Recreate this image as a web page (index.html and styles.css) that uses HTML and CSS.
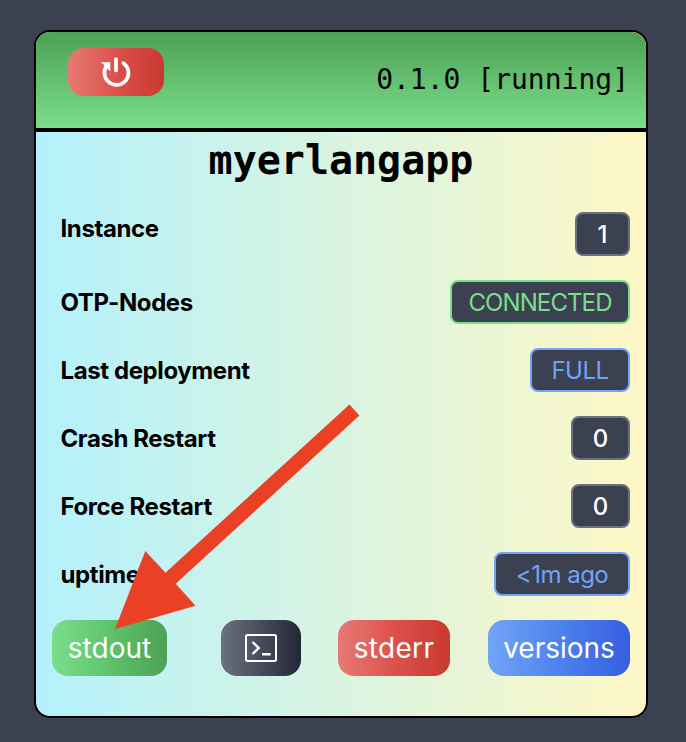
FILE: index.html
```
<!DOCTYPE html>
<html lang="en">
<head>
<meta charset="utf-8">
<title>myerlangapp</title>
<link rel="stylesheet" href="styles.css">
</head>
<body>
<main class="card">
  <header class="card-header">
    <button class="btn restart red" aria-label="Restart">
      <svg width="32" height="32" viewBox="0 0 32 32" fill="none" stroke="#fff" stroke-width="3.8" stroke-linecap="round">
        <path d="M16 3.2v11.2M23.5 7.2A12 12 0 1 1 7.8 8.6"/>
        <path d="M.4 6.2h9.9v9L7.5 12.4 5 12.2 4 8.8z" fill="#fff" stroke="none"/>
      </svg>
    </button>
    <span class="version">0.1.0 [running]</span>
  </header>
  <h1 class="title">myerlangapp</h1>
  <section class="rows">
    <div class="row first"><span class="label">Instance</span><span class="badge one">1</span></div>
    <div class="row"><span class="label">OTP-Nodes</span><span class="badge connected">CONNECTED</span></div>
    <div class="row"><span class="label">Last deployment</span><span class="badge blue-text full">FULL</span></div>
    <div class="row"><span class="label">Crash Restart</span><span class="badge zero">0</span></div>
    <div class="row"><span class="label">Force Restart</span><span class="badge zero">0</span></div>
    <div class="row"><span class="label">uptime</span><span class="badge blue-text ago">&lt;1m ago</span></div>
  </section>
  <footer class="actions">
    <button class="btn stdout">stdout</button>
    <button class="btn terminal" aria-label="Terminal">
      <svg width="32" height="28" viewBox="0 0 32 28" fill="none" stroke="#fff" stroke-width="2">
        <rect x="1" y="1" width="30" height="26" rx="1.5"/>
        <path d="M7.5 8l6.2 6-6.2 6M17 20.2h8.7" stroke-width="2.4"/>
      </svg>
    </button>
    <button class="btn stderr red">stderr</button>
    <button class="btn versions">versions</button>
  </footer>
  <svg class="arrow" width="246" height="226" viewBox="114 404 246 226">
    <path d="M115 629L145.3 551 165.5 572.7 349.5 404.5 359.4 415.5 175.7 583.7 195.5 605.7z" fill="#ea4025"/>
  </svg>
</main>
</body>
</html>
```

FILE: styles.css
```
* { box-sizing: border-box; }
body {
  margin: 0;
  padding: 30px 38px 24px 34px;
  background: #3b4150;
  font-family: Inter, "Liberation Sans", sans-serif;
  color: #000;
}
.card {
  position: relative;
  height: 688px;
  overflow: hidden;
  border: 2px solid #000;
  border-radius: 16px;
  background: linear-gradient(90deg, #b4f1fc, #fef7c6);
}
.card-header {
  display: flex;
  justify-content: space-between;
  height: 100px;
  padding: 16px 17px 0 32px;
  border-bottom: 4px solid #000;
  border-radius: 14px 14px 0 0;
  background: linear-gradient(#4ca154, #7bde8b);
}
.version {
  font: 28px/64px "DejaVu Sans Mono", monospace;
}
.title {
  height: 80px;
  margin: 0;
  text-align: center;
  font: bold 40px/56px "DejaVu Sans Mono", monospace;
}
.rows {
  display: grid;
  gap: 24px;
  padding: 0 16px 0 24.5px;
}
.row {
  display: flex;
  height: 44px;
  align-items: center;
  justify-content: space-between;
}
.label {
  padding-top: 2px;
  font-size: 24px;
  line-height: 32px;
  font-weight: 650;
  letter-spacing: -0.4px;
}
.first .label { margin-bottom: 12px; }
.badge {
  height: 44px;
  border: 2px solid #6b7180;
  border-radius: 8px;
  background: #3b4150;
  color: #fff;
  font-size: 24px;
  line-height: 42px;
  text-align: center;
  white-space: nowrap;
}
.one { width: 55px; font-weight: 500; }
.zero { width: 59px; font-weight: 500; }
.connected { width: 180px; border-color: #7bde8b; color: #7bde8b; letter-spacing: -0.9px; }
.blue-text { border-color: #72a4f6; color: #72a4f6; letter-spacing: -0.5px; }
.full { width: 100px; }
.ago { width: 136px; }
.actions {
  display: grid;
  grid-template-columns: 115px 80px 112px 142px;
  column-gap: 38px;
  justify-content: end;
  padding: 24px 16px 0;
}
.btn {
  display: flex;
  height: 56px;
  align-items: center;
  justify-content: center;
  padding: 0;
  border: 0;
  border-radius: 16px;
  color: #fff;
  font-family: inherit;
  font-size: 28px;
  line-height: 40px;
}
.restart { width: 96px; height: 48px; }
.red { background: linear-gradient(90deg, #e87a77, #dc514b 50%, #c83930); }
.stdout {
  margin-left: -15px;
  margin-right: 15px;
  background: linear-gradient(90deg, #7bde8b, #5fc26b 50%, #4ca154);
}
.terminal {
  margin-left: 1px;
  margin-right: -1px;
  background: linear-gradient(90deg, #6b7180, #212736);
}
.stderr { letter-spacing: 0.3px; }
.versions { background: linear-gradient(90deg, #72a4f6, #4e82ee 50%, #365fe0); }
.arrow {
  position: absolute;
  left: 78px;
  top: 372px;
}
```
